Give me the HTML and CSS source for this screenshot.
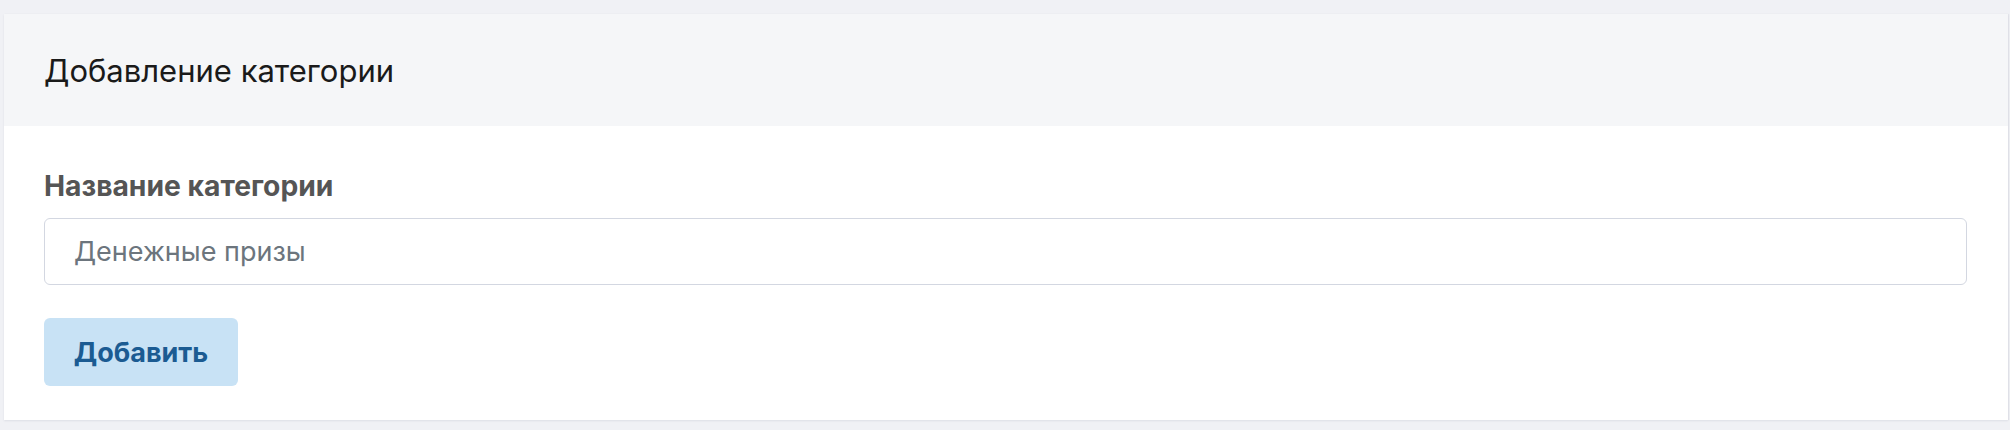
FILE: index.html
```html
<!DOCTYPE html>
<html lang="ru">
<head>
<meta charset="utf-8">
<link rel="stylesheet" href="styles.css">
</head>
<body>
<div class="page">
  <section class="card">
    <header class="card-header">
      <h1 class="card-title">Добавление категории</h1>
    </header>
    <form class="card-body">
      <label class="field-label" for="cat">Название категории</label>
      <input class="field-input" id="cat" type="text" placeholder="Денежные призы">
      <div class="actions">
        <button class="btn-add" type="button">Добавить</button>
      </div>
    </form>
  </section>
</div>
</body>
</html>
```

FILE: styles.css
```css
* { box-sizing: border-box; }
html, body { margin: 0; padding: 0; }
body {
  background: #f0f1f5;
  font-family: Inter, "Noto Sans", sans-serif;
  width: 2010px;
  height: 430px;
  overflow: hidden;
}
.page {
  padding: 14px 2px 0 4px;
}
.card {
  background: #ffffff;
  box-shadow: 0 1px 2px rgba(30, 40, 80, 0.08), 1px 0 1px rgba(30, 40, 80, 0.05);
  width: 2004px;
}
.card-header {
  background: #f5f6f8;
  height: 112px;
  display: flex;
  align-items: center;
  padding: 0 40px;
}
.card-title {
  margin: 0;
  font-size: 31px;
  font-weight: 400;
  color: #1a1a1a;
}
.card-body {
  display: flex;
  flex-direction: column;
  padding: 44px 41px 34px 40px;
  margin: 0;
}
.field-label {
  font-size: 28.25px;
  font-weight: 700;
  color: #555555;
  line-height: 32px;
  margin-bottom: 16px;
}
.field-input {
  height: 67px;
  border: 1.5px solid #d3d7e1;
  border-radius: 6px;
  padding: 0 29px;
  font-family: inherit;
  font-size: 27px;
  color: #333;
  outline: none;
}
.field-input::placeholder { color: #6c757d; }
.actions {
  display: flex;
  margin-top: 33px;
}
.btn-add {
  width: 194px;
  height: 68px;
  border: none;
  border-radius: 6px;
  background: #c8e2f5;
  color: #1b5b92;
  font-family: inherit;
  font-size: 27px;
  font-weight: 700;
  cursor: pointer;
}
```
